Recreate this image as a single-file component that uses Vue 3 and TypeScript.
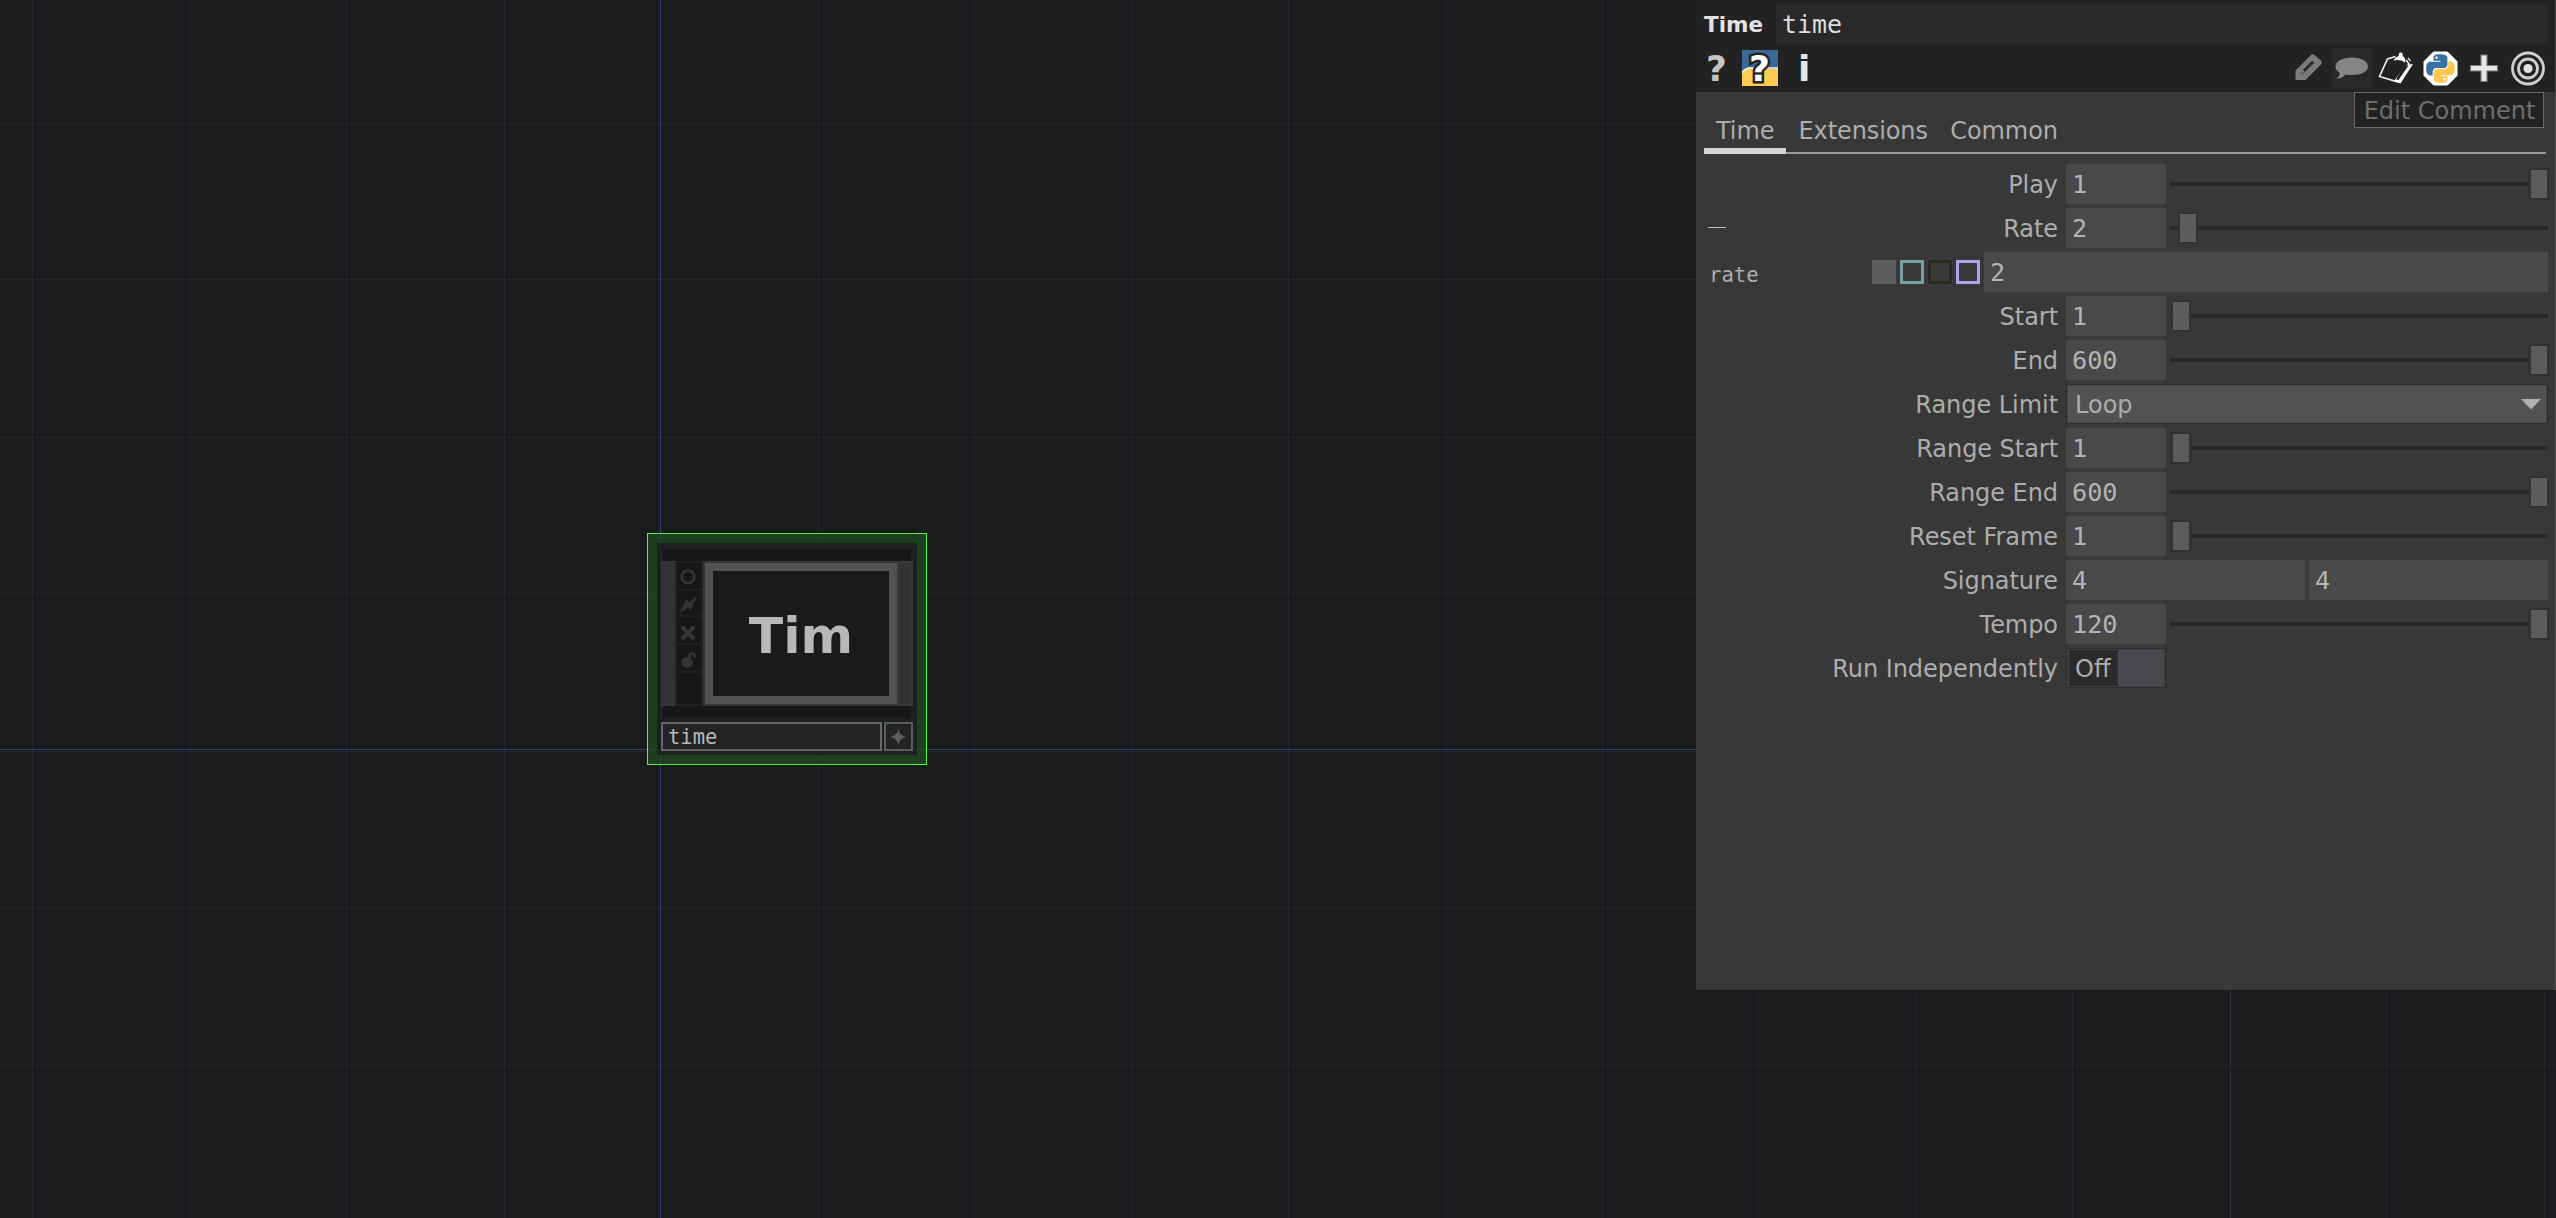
<script setup lang="ts">
type Kind = 'slider' | 'menu' | 'pair' | 'toggle' | 'expr'

interface Param {
  label: string
  kind: Kind
  values: string[]
  handle?: number
  open?: boolean
}

const params: Param[] = [
  { label: 'Play', kind: 'slider', values: ['1'], handle: 359 },
  { label: 'Rate', kind: 'slider', values: ['2'], handle: 8, open: true },
  { label: 'rate', kind: 'expr', values: ['2'] },
  { label: 'Start', kind: 'slider', values: ['1'], handle: 1 },
  { label: 'End', kind: 'slider', values: ['600'], handle: 359 },
  { label: 'Range Limit', kind: 'menu', values: ['Loop'] },
  { label: 'Range Start', kind: 'slider', values: ['1'], handle: 1 },
  { label: 'Range End', kind: 'slider', values: ['600'], handle: 359 },
  { label: 'Reset Frame', kind: 'slider', values: ['1'], handle: 1 },
  { label: 'Signature', kind: 'pair', values: ['4', '4'] },
  { label: 'Tempo', kind: 'slider', values: ['120'], handle: 359 },
  { label: 'Run Independently', kind: 'toggle', values: ['Off'] },
]

const tabs = ['Time', 'Extensions', 'Common']
const modes = ['constant', 'expression', 'export', 'bind']

const columns = [32, 190, 346, 504, 818, 974, 1132, 1288, 1446, 1602, 1758, 1916, 2072, 2386, 2544]
const rows = [123, 279, 437, 593, 751, 907, 1065]

const snake =
  'M14.25.18l.9.2.73.26.59.3.45.32.34.34.25.34.16.33.1.3.04.26.02.2-.01.13V8.5l-.05.63-.13.55-.21.46-.26.38-.3.31-.33.25-.35.19-.35.14-.33.1-.3.07-.26.04-.21.02H8.77l-.69.05-.59.14-.5.22-.41.27-.33.32-.27.35-.2.36-.15.37-.1.35-.07.32-.04.27-.02.21v3.06H3.17l-.21-.03-.28-.07-.32-.12-.35-.18-.36-.26-.36-.36-.35-.46-.32-.59-.28-.73-.21-.88-.14-1.05-.05-1.23.06-1.22.16-1.04.24-.87.32-.71.36-.57.4-.44.42-.33.42-.24.4-.16.36-.1.32-.05.24-.01h.16l.06.01h8.16v-.83H6.18l-.01-2.75-.02-.37.05-.34.11-.31.17-.28.25-.26.31-.23.38-.2.44-.18.51-.15.58-.12.64-.1.71-.06.77-.04.84-.02 1.27.05zm-6.3 1.98l-.23.33-.08.41.08.41.23.34.33.22.41.09.41-.09.33-.22.23-.34.08-.41-.08-.41-.23-.33-.33-.22-.41-.09-.41.09z'
</script>

<template>
  <main class="network">
    <svg class="grid" width="2556" height="1218" shape-rendering="crispEdges">
      <rect v-for="y in rows" :key="'h' + y" x="0" :y="y" width="2556" height="1" fill="#24252a" />
      <rect v-for="x in columns" :key="'v' + x" :x="x" y="0" width="1" height="1218" fill="#23242d" />
      <rect x="2230" y="0" width="1" height="1218" fill="#2b2c42" />
      <rect x="660" y="0" width="1" height="1218" fill="#383c70" />
      <rect x="0" y="749" width="2556" height="1" fill="#3b3d68" />
    </svg>

    <section class="node">
      <div class="body">
        <div class="strip"></div>
        <div class="middle">
          <div class="connector left"></div>
          <div class="flags">
            <div class="flag f1">
              <svg width="24" height="26" viewBox="0 0 24 26"><circle cx="11" cy="13.7" r="6.3" fill="none" stroke="#343434" stroke-width="2.8" /></svg>
            </div>
            <div class="flag f2">
              <svg width="24" height="24" viewBox="0 0 24 24"><path d="M2.5 22 L9.500 8 L12 11.500 L20 5 L13.500 20 L11.2 16.5 Z" fill="#343434" /></svg>
            </div>
            <div class="flag f3">
              <svg width="24" height="26" viewBox="0 0 24 26"><path d="M6 11l10 10M16 11l-10 10" stroke="#363636" stroke-width="4" stroke-linecap="round" /></svg>
            </div>
            <div class="flag f4">
              <svg width="24" height="26" viewBox="0 0 24 26"><circle cx="10" cy="17.5" r="5.6" fill="#343434" /><path d="M12.5 13V10a2.8 2.8 0 0 1 5.2 0v2.5" fill="none" stroke="#343434" stroke-width="2.6" /></svg>
            </div>
            <div class="flag f5"></div>
          </div>
          <div class="viewer">Tim</div>
          <div class="connector right"></div>
        </div>
        <div class="strip low"></div>
        <div class="footer">
          <div class="node-name">time</div>
          <div class="viewer-toggle">
            <svg width="25" height="25" viewBox="0 0 25 25"><path d="M12.3 4.5Q13.3 12 20.5 13Q13.3 14 12.3 21.5Q11.3 14 4 13Q11.3 12 12.3 4.5Z" fill="#5c5c5c" /></svg>
          </div>
        </div>
      </div>
    </section>

    <aside class="panel">
      <header class="head">
        <div class="title">
          <span class="op-type">Time</span>
          <span class="op-name">time</span>
        </div>
        <div class="tools">
          <span class="glyph help">?</span>
          <span class="py-help">
            <svg width="36" height="36" viewBox="0 0 36 36">
              <rect width="36" height="36" fill="#386998" />
              <path d="M0 23Q4 17.5 12 18.5H36V36H0Z" fill="#fdcc55" />
              <path d="M0 22.5Q4 17 12 18H36" fill="none" stroke="#eef0e8" stroke-width="1.6" />
              <text x="7" y="31.4" class="py-mark">?</text>
            </svg>
          </span>
          <span class="glyph info">i</span>
          <div class="actions">
            <svg class="act" width="40" height="40" viewBox="0 0 40 40">
              <path d="M7.500 32V22.5L23 7Q24.500 5.500 26.500 7L33 12.5Q34.500 14.5 33 16.500L17.500 32Z" fill="#7b7b7b" />
              <path d="M15 21.800L24 12.800L26.300 14.800L17 24Z" fill="#2a2a2a" />
              <path d="M14 23.500L16 25.500L13 26.500Z" fill="#2a2a2a" opacity=".5" />
            </svg>
            <svg class="act comment" width="40" height="40" viewBox="0 0 40 40">
              <path d="M20 9.5C29 9.5 36 13 36 18.5S29 27 20 27C17.500 27 15.500 27 13.500 26.500C11 29.500 8 31 4 30.500C7 29 8 27.500 7.500 24.500C4.500 22.800 3.500 20.800 3.500 18.500C3.500 13 11 9.500 20 9.500Z" fill="#858585" />
            </svg>
            <svg class="act" width="40" height="40" viewBox="0 0 40 40">
              <path d="M19.500 8.500L11.500 11L3.500 28.500L22 34L33 16L30 12" fill="none" stroke="#ededed" stroke-width="1.700" />
              <path d="M30 17L37 16L24.500 35.500L18 33Z" fill="#fff" />
              <path d="M28.500 17L20 31.500L22.500 32L32.500 17.500Z" fill="#222" />
              <path d="M17.500 12.500Q19 9 23 8Q22 5 24.500 4.500Q27.500 4.500 26.500 8Q30 9.500 29 14.500Q24 11 17.500 12.500Z" fill="#fff" />
              <path d="M32 10l2.500 3" stroke="#ccc" stroke-width="1.500" />
            </svg>
            <svg class="act" width="40" height="40" viewBox="0 0 40 40">
              <path d="M13.500 4H27.500L37 13.500V27.500L27.500 37H13.500L4 27.500V13.500Z" fill="#fff" stroke="#fff" stroke-width="1" stroke-linejoin="round" />
              <circle cx="20.500" cy="20.500" r="16.600" fill="#fff" />
              <g transform="translate(6.200 6.200) scale(1.190)">
                <path :d="snake" fill="#3870a3" />
                <path :d="snake" fill="#fec850" transform="rotate(180 12 12)" />
              </g>
            </svg>
            <svg class="act" width="40" height="40" viewBox="0 0 40 40">
              <path d="M17 7h6v10.500h10.500v5.500h-10.500v10.500h-6v-10.500h-10.500v-5.500h10.500z" fill="#e8e8e8" stroke="#777" stroke-width="1.200" />
            </svg>
            <svg class="act" width="40" height="40" viewBox="0 0 40 40">
              <g fill="none" stroke="#cfcfcf" stroke-width="2.800">
                <circle cx="20" cy="20.500" r="15.500" /><circle cx="20" cy="20.500" r="9.500" />
              </g>
              <circle cx="20" cy="20.500" r="4.600" fill="#e0e0e0" />
            </svg>
          </div>
        </div>
      </header>
      <div class="tooltip">Edit Comment</div>

      <nav class="tabs">
        <span v-for="(t, i) in tabs" :key="t" class="tab" :class="{ active: i === 0 }">{{ t }}</span>
      </nav>

      <div class="params">
        <div v-for="p in params" :key="p.label" class="row">
          <template v-if="p.kind === 'expr'">
            <span class="par-name">{{ p.label }}</span>
            <span class="modes"><i v-for="m in modes" :key="m" :class="m"></i></span>
            <span class="field wide">{{ p.values[0] }}</span>
          </template>
          <template v-else>
            <span class="label"><i v-if="p.open" class="collapse"></i>{{ p.label }}</span>
            <template v-if="p.kind === 'slider'">
              <span class="field short">{{ p.values[0] }}</span>
              <span class="slider"><b :style="{ marginLeft: p.handle + 'px' }"></b></span>
            </template>
            <span v-else-if="p.kind === 'menu'" class="menu">
              {{ p.values[0] }}
              <svg width="20" height="11" viewBox="0 0 20 11"><path d="M0 0h20L10 10.500z" fill="#b0b0b0" /></svg>
            </span>
            <span v-else-if="p.kind === 'pair'" class="pair">
              <span v-for="(v, i) in p.values" :key="i" class="field wide">{{ v }}</span>
            </span>
            <span v-else class="toggle"><span class="off">{{ p.values[0] }}</span></span>
          </template>
        </div>
      </div>
    </aside>
  </main>
</template>

<style>
body {
  margin: 0;
  background: #1a1b1c;
}
</style>

<style scoped>
.network {
  position: relative;
  width: 2556px;
  height: 1218px;
  overflow: hidden;
  background: #1a1b1c;
  font-family: Verdana, 'DejaVu Sans', sans-serif;
}
.grid { display: block; }

/* node tile */
.node {
  position: absolute;
  left: 647px;
  top: 533px;
  box-sizing: border-box;
  width: 280px;
  height: 232px;
  padding: 9px;
  border: 1px solid #58f542;
  background: rgba(33, 76, 30, 0.74);
}
.body {
  box-sizing: border-box;
  height: 212px;
  padding: 4px 4px;
  background: rgba(27, 28, 31, 0.86);
}
.strip {
  box-sizing: border-box;
  height: 14px;
  border: 2px solid #202021;
  border-bottom: 0;
  background: #171717;
}
.strip.low {
  border-top: 0;
  border-bottom: 2px solid #202021;
}
.middle { display: flex; height: 145px; }
.connector { box-sizing: border-box; background: #333; border: 2px solid #363636; }
.connector.left { width: 14px; border-right: 0; }
.connector.right { width: 16px; border-color: #393939; }
.flags {
  box-sizing: border-box;
  width: 28px;
  padding: 2px;
  background: #202020;
  display: flex;
  flex-direction: column;
  gap: 2px;
}
.flag { height: 26px; background: #171717; }
.flag svg { display: block; }
.flag.f2 { height: 24px; }
.flag.f5 { height: 31px; }
.viewer {
  box-sizing: border-box;
  width: 194px;
  height: 145px;
  border: 2px solid #363636;
  border-right: 0;
  box-shadow: inset 0 0 0 8px #525252;
  background: #1a1a1a;
  color: #b8b8b8;
  font: bold 50.500px/145px 'DejaVu Sans', sans-serif;
  text-align: center;
}
.footer { display: flex; gap: 2px; margin-top: 2px; }
.node-name {
  box-sizing: border-box;
  width: 221px;
  height: 29px;
  border: 2px solid #66666a;
  padding-left: 5px;
  background: #232323;
  color: #b9b9b9;
  font: 20.500px/27px 'DejaVu Sans Mono', monospace;
}
.viewer-toggle {
  box-sizing: border-box;
  width: 29px;
  height: 29px;
  border: 2px solid #5c5c60;
  background: #222423;
}
.viewer-toggle svg { display: block; }

/* parameter window */
.panel {
  position: absolute;
  left: 1696px;
  top: 0;
  box-sizing: border-box;
  width: 860px;
  height: 990px;
  border-right: 1px solid #4a4a4a;
  background: #383838;
  color: #adadad;
}
.head {
  box-sizing: border-box;
  height: 92px;
  padding-top: 4px;
  background: #222;
}
.title { display: flex; height: 40px; }
.op-type {
  box-sizing: border-box;
  width: 80px;
  padding-left: 8px;
  color: #e2e2e2;
  font: bold 21.500px/42px 'DejaVu Sans', sans-serif;
}
.op-name {
  box-sizing: border-box;
  width: 772px;
  padding-left: 6px;
  background: #292929;
  color: #dcdcdc;
  font: 24.900px/42px 'DejaVu Sans Mono', monospace;
}
.tools { display: flex; padding-top: 4px; height: 40px; }
.glyph { color: #e6e6e6; font: bold 36px/41px 'DejaVu Sans', sans-serif; }
.help { width: 36px; padding-left: 10px; color: #c4c4c4; }
.py-help { width: 36px; padding-top: 2px; }
.py-help svg { display: block; overflow: visible; }
.py-mark {
  font: bold 36px 'DejaVu Sans', sans-serif;
  fill: #fff;
  stroke: #242424;
  stroke-width: 5px;
  paint-order: stroke;
}
.info { padding-left: 20px; }
.actions { display: flex; gap: 4px; margin-left: auto; margin-right: 7px; }
.act { display: block; }
.comment { background: #282828; }
.tooltip {
  position: absolute;
  left: 658px;
  top: 92px;
  box-sizing: border-box;
  width: 190px;
  height: 36px;
  padding-left: 1px;
  border: 1px solid #6c6c6c;
  background: #222;
  color: #6e6e6e;
  font-size: 24px;
  line-height: 37px;
  text-align: center;
  white-space: nowrap;
}
.tabs {
  box-sizing: border-box;
  display: flex;
  width: 842px;
  height: 46px;
  margin: 16px 0 0 8px;
  border-bottom: 2px solid #9a9a9a;
}
.tab {
  box-sizing: border-box;
  height: 46px;
  padding: 0 10px 0 12.500px;
  font-size: 24px;
  letter-spacing: -0.1px;
  line-height: 46px;
}
.tab.active { width: 82px; padding-left: 12px; border-bottom: 6px solid #d4d4d4; }
.params {
  display: flex;
  flex-direction: column;
  gap: 4px;
  margin-top: 10px;
}
.row { display: flex; height: 40px; width: 852px; }
.label {
  box-sizing: border-box;
  display: flex;
  justify-content: flex-end;
  width: 370px;
  padding-right: 8px;
  font-size: 24px;
  letter-spacing: -0.05px;
  line-height: 43px;
  white-space: nowrap;
}
.collapse {
  width: 18px;
  height: 1px;
  margin: 19px auto 0 12px;
  background: #bcbcbc;
}
.field {
  box-sizing: border-box;
  padding-left: 6px;
  background: #494949;
  color: #b4b4b4;
  font: 25.200px/42px 'DejaVu Sans Mono', monospace;
}
.field.short { width: 100px; }
.field.wide { flex: 1; }
.slider {
  width: 378px;
  margin-left: 4px;
  background: linear-gradient(#282828, #282828) 0 18px / 100% 4px no-repeat;
}
.slider b {
  box-sizing: border-box;
  display: block;
  width: 20px;
  height: 32px;
  margin-top: 4px;
  border: 2px solid #323232;
  background: #5c5c5c;
}
.par-name {
  width: 163px;
  padding-left: 13px;
  font: 20.600px/46px 'DejaVu Sans Mono', monospace;
}
.modes { display: flex; gap: 4px; padding-top: 8px; width: 112px; }
.modes i { box-sizing: border-box; width: 24px; height: 24px; border: 3px solid #5e5e5e; }
.modes .constant { background: #5e5e5e; }
.modes .expression { border-color: #74a0a0; }
.modes .export { border-color: #262c1e; }
.modes .bind { border-color: #aea3e8; }
.menu {
  box-sizing: border-box;
  display: flex;
  justify-content: space-between;
  width: 482px;
  padding: 0 6px 0 8px;
  border: 1px solid #2c2c2c;
  box-shadow: inset 0 0 0 1px #484848;
  background: #525252;
  font-size: 24px;
  line-height: 41px;
}
.menu svg { margin-top: 14px; }
.pair { display: flex; flex: 1; gap: 4px; }
.toggle {
  box-sizing: border-box;
  width: 100px;
  padding: 1px 1px 1px 2px;
  border: 1px solid #2c2c2c;
  background: linear-gradient(#49484e, #49484e) content-box, #404040;
}
.off {
  display: block;
  width: 49px;
  height: 36px;
  box-sizing: border-box;
  padding-left: 6px;
  background: #2b2b2b;
  font-size: 24px;
  line-height: 39px;
}
</style>
